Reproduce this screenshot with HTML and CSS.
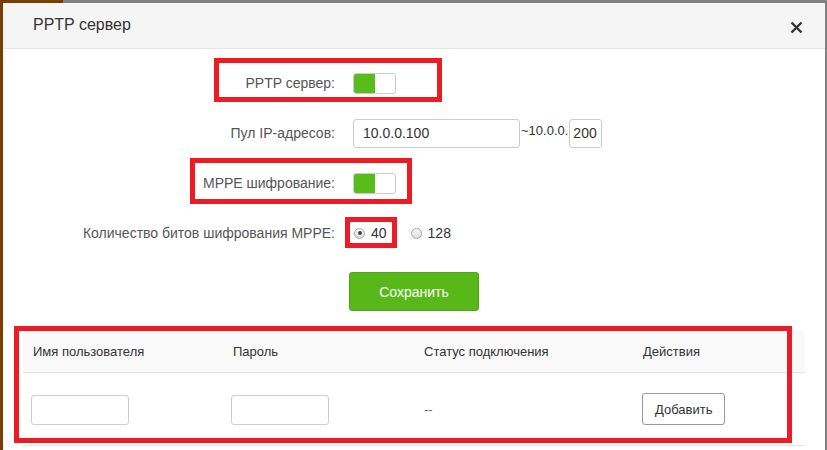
FILE: index.html
```html
<!DOCTYPE html>
<html lang="ru">
<head>
    <meta charset="UTF-8">
    <meta name="viewport" content="width=device-width, initial-scale=1.0">
    <title>PPTP сервер</title>
    <link rel="stylesheet" href="styles.css">
</head>
<body>
    <div class="page">
        <div class="dialog">
            <div class="dialog-head">
                <span class="dialog-title">PPTP сервер</span>
                <span class="close">
                    <svg width="13" height="13" viewBox="0 0 13 13"><path d="M1.5 1.5 L11.5 11.5 M11.5 1.5 L1.5 11.5" stroke="#333" stroke-width="2.4" fill="none"/></svg>
                </span>
            </div>
            <div class="dialog-body">
                <div class="form">
                    <div class="row">
                        <label class="label">PPTP сервер:</label>
                        <div class="control"><span class="toggle on"><i></i></span></div>
                    </div>
                    <div class="row">
                        <label class="label">Пул IP-адресов:</label>
                        <div class="control">
                            <input class="text ip-start" type="text" value="10.0.0.100">
                            <span class="ip-prefix">~10.0.0.</span>
                            <input class="text ip-end" type="text" value="200">
                        </div>
                    </div>
                    <div class="row">
                        <label class="label">MPPE шифрование:</label>
                        <div class="control"><span class="toggle on"><i></i></span></div>
                    </div>
                    <div class="row">
                        <label class="label">Количество битов шифрования MPPE:</label>
                        <div class="control">
                            <span class="radio checked"></span><span class="radio-text">40</span>
                            <span class="radio"></span><span class="radio-text">128</span>
                        </div>
                    </div>
                </div>
                <div class="actions">
                    <button class="btn-save">Сохранить</button>
                </div>
                <table class="users">
                    <thead>
                        <tr>
                            <th class="c1">Имя пользователя</th>
                            <th class="c2">Пароль</th>
                            <th class="c3">Статус подключения</th>
                            <th class="c4">Действия</th>
                        </tr>
                    </thead>
                    <tbody>
                        <tr>
                            <td><input class="text cell-input" type="text"></td>
                            <td><input class="text cell-input" type="text"></td>
                            <td class="status">--</td>
                            <td><button class="btn-add">Добавить</button></td>
                        </tr>
                    </tbody>
                </table>

                <!-- красные рамки-пометки поверх скриншота -->
                <span class="mark mark-pptp"></span>
                <span class="mark mark-mppe"></span>
                <span class="mark mark-bits"></span>
                <span class="mark mark-table"></span>
            </div>
        </div>
    </div>
</body>
</html>
```

FILE: styles.css
```css
html, body {
    margin: 0;
    height: 100%;
}
body {
    font-family: "Liberation Sans", Arial, sans-serif;
    background: linear-gradient(to right, #7a3f00 63px, #808080 63px);
    padding-top: 3px;
    box-sizing: border-box;
    overflow: hidden;
}
.page {
    border-left: 3px solid #7a3f00;
    background-color: #808080;
    height: 100%;
    padding-right: 2px;
}
.dialog {
    background-color: #fff;
    height: 100%;
}
.dialog-head {
    height: 45px;
    background-color: #f5f5f5;
    border-bottom: 1px solid #e5e5e5;
    display: flex;
    align-items: center;
    justify-content: space-between;
    padding: 0 22px 0 30px;
}
.dialog-title {
    font-size: 16px;
    color: #333;
    margin-top: -1px;
}
.close {
    display: flex;
    margin-top: 4px;
}
.dialog-body {
    position: relative;
    padding: 19px 20px 0 20px;
}
.form {
    display: flex;
    flex-direction: column;
    gap: 20px;
}
.row {
    display: grid;
    grid-template-columns: 312px 1fr;
    column-gap: 18px;
    height: 30px;
    align-items: center;
}
.label {
    text-align: right;
    font-size: 14px;
    color: #555;
}
.control {
    display: flex;
    align-items: center;
}
.toggle {
    display: inline-block;
    width: 41px;
    height: 19px;
    border: 1px solid #ccc;
    border-radius: 3px;
    background-color: #fff;
    position: relative;
    overflow: hidden;
}
.toggle.on i {
    display: block;
    width: 21px;
    height: 19px;
    background-color: #58bc1b;
}
.text {
    font-family: "Liberation Sans", Arial, sans-serif;
    font-size: 14px;
    color: #333;
    border: 1px solid #ccc;
    border-radius: 3px;
    height: 29px;
    box-sizing: border-box;
    outline: none;
}
.ip-start {
    width: 167px;
    padding: 0 0 0 9px;
}
.ip-prefix {
    font-size: 13px;
    color: #333;
    margin: -5px 1px 0 1px;
}
.ip-end {
    width: 33px;
    padding: 0 0 0 3px;
}
.radio {
    width: 11px;
    height: 11px;
    border-radius: 50%;
    border: 1px solid #a5a5a5;
    box-sizing: border-box;
    background: linear-gradient(#fafafa, #dcdcdc);
    margin: 0 6px 0 1px;
    position: relative;
}
.radio.checked::after {
    content: "";
    position: absolute;
    left: 2.5px;
    top: 2.5px;
    width: 4px;
    height: 4px;
    border-radius: 50%;
    background-color: #444;
}
.radio-text {
    font-size: 14px;
    color: #333;
    margin-right: 23px;
}
.actions {
    display: flex;
    justify-content: center;
    margin-top: 24px;
}
.btn-save {
    width: 130px;
    height: 39px;
    background-color: #58b81a;
    border: 1px solid #4ea614;
    border-radius: 3px;
    color: #fff;
    font-family: "Liberation Sans", Arial, sans-serif;
    font-size: 14px;
}
.users {
    width: 100%;
    margin-top: 19px;
    border-collapse: collapse;
    font-size: 13px;
    color: #333;
}
.users th {
    background-color: #f9f9f9;
    height: 42px;
    font-weight: normal;
    text-align: left;
    padding: 0 10px;
    border-bottom: 1px solid #e5e5e5;
}
.users td {
    height: 72px;
    padding: 0 8px;
    border-bottom: 1px solid #e5e5e5;
}
.users th.c1 { width: 180px; }
.users th.c2 { width: 171px; }
.users th.c3 { width: 199px; }
.users td.status {
    padding-left: 10px;
    color: #666;
}
.cell-input {
    width: 98px;
    height: 30px;
    margin-top: 2px;
}
.btn-add {
    height: 32px;
    padding: 0 12px;
    background-color: #fff;
    border: 1px solid #999;
    border-radius: 3px;
    font-family: "Liberation Sans", Arial, sans-serif;
    font-size: 13px;
    color: #333;
    margin-left: 1px;
}
.mark {
    position: absolute;
    border: 5px solid #ed1c24;
    box-sizing: border-box;
}
.mark-pptp {
    left: 211px;
    top: 9px;
    width: 228px;
    height: 44px;
}
.mark-mppe {
    left: 187px;
    top: 109px;
    width: 222px;
    height: 46px;
}
.mark-bits {
    left: 342px;
    top: 168px;
    width: 52px;
    height: 31px;
}
.mark-table {
    left: 11px;
    top: 277px;
    width: 778px;
    height: 117px;
}
```
